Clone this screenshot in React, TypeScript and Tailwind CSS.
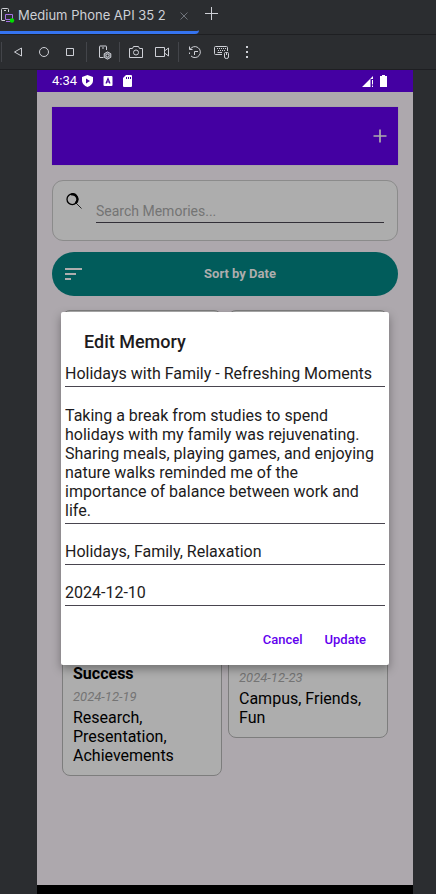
import React from "react";

function Divider() {
  return <span className="h-5 w-px shrink-0 bg-[#43454a]" />;
}

function ToolButton({ label, className, children }: { label: string; className: string; children: React.ReactNode }) {
  return (
    <button type="button" aria-label={label} className={`shrink-0 ${className}`}>
      <svg width="16" height="16" viewBox="0 0 16 16" fill="none" stroke="#ced0d6" strokeWidth="1">
        {children}
      </svg>
    </button>
  );
}

function TabBar() {
  return (
    <div className="flex h-[35px] border-b border-[#1e1f22]">
      <div className="flex w-[199px] shrink-0 items-center rounded-br-sm border-b-3 border-[#3574f0] text-[#ced0d6]">
        <svg width="16" height="16" viewBox="0 0 16 16" fill="none" className="shrink-0">
          <path d="M5 12.500H2A.5.5 0 0 1 1.500 12V1.500A1 1 0 0 1 2.500 .500H7.500A1 1 0 0 1 8.500 1.500V4" stroke="#ced0d6" />
          <path d="M4 2.500H6" stroke="#ced0d6" />
          <path d="M5.500 6.500H12.500V11.500H5.500ZM6 13.500H10" stroke="#a571e6" />
          <circle cx="12" cy="12.500" r="2.200" fill="#00e000" />
        </svg>
        <span className="ml-[2px] whitespace-nowrap font-['Inter',sans-serif] text-[13px]">Medium Phone API 35 2</span>
        <button type="button" aria-label="Close tab" className="ml-[13px]">
          <svg width="10" height="10" viewBox="0 0 10 10" stroke="#6f737a" fill="none">
            <path d="M1.500 1.500L8.500 8.500M8.500 1.500L1.500 8.500" />
          </svg>
        </button>
      </div>
      <button type="button" aria-label="New tab" className="mb-2 ml-[5px]">
        <svg width="14" height="14" viewBox="0 0 14 14" stroke="#ced0d6" fill="none">
          <path d="M7.500 1V14M1 7.500H14" />
        </svg>
      </button>
    </div>
  );
}

function Toolbar() {
  return (
    <div className="flex h-[35px] items-center border-b border-[#1e1f22] pl-px">
      <Divider />
      <ToolButton label="Back" className="ml-2">
        <path d="M11.500 4V12L4.500 8Z" strokeLinejoin="round" />
      </ToolButton>
      <ToolButton label="Home" className="ml-[10px]">
        <circle cx="8" cy="8" r="4.500" />
      </ToolButton>
      <ToolButton label="Overview" className="ml-[10px] mr-2">
        <path d="M4.500 4.500H11.500V11.500H4.500Z" />
      </ToolButton>
      <Divider />
      <ToolButton label="Device settings" className="ml-[10px] mr-[6px]">
        <path d="M6.500 13.500H3A.5.5 0 0 1 2.500 13V2.500A.5.5 0 0 1 3 2H9A.5.5 0 0 1 9.500 2.500V6M5 4H7" />
        <path d="M10.500 7.900L13.800 9.700V13.300L10.500 15.200L7.200 13.300V9.700Z" fill="#6f737a" />
        <circle cx="10.500" cy="11.500" r="1.500" fill="#2b2d30" />
      </ToolButton>
      <Divider />
      <ToolButton label="Screenshot" className="ml-2">
        <path d="M1.500 4.500H4.500L5.500 2.500H10.500L11.500 4.500H14.500V13.500H1.500Z" strokeLinejoin="round" />
        <circle cx="8" cy="8.500" r="2.500" />
      </ToolButton>
      <ToolButton label="Record screen" className="ml-[10px] mr-2">
        <path d="M1.500 3.500H10.500V12.500H1.500ZM10.500 7L14.500 4V12L10.500 9" strokeLinejoin="round" />
      </ToolButton>
      <Divider />
      <ToolButton label="Snapshots" className="ml-2">
        <path d="M2.500 2.500V5.500H5.500M3 5.500A5.500 5.500 0 1 1 4 12M2.500 8.500V10M7.500 11V7.500H11" />
      </ToolButton>
      <ToolButton label="Hardware input" className="ml-[10px]">
        <path d="M9 10.500H2.500A1 1 0 0 1 1.500 9.500V3.500A1 1 0 0 1 2.500 2.500H13.500A1 1 0 0 1 14.500 3.500V7" />
        <path d="M4 4.500H13M5 6.500H12" strokeDasharray="1 1" />
        <path d="M4.500 8.500H9M11.500 9.500Q11.500 8.500 12.500 8.500H14.500Q15.500 8.500 15.500 9.500V13Q15.500 14.500 13.500 14.500Q11.500 14.500 11.500 13ZM13.500 9V11" />
      </ToolButton>
      <ToolButton label="More" className="ml-[10px]">
        <path d="M7 2H9V4H7ZM7 7H9V9H7ZM7 12H9V14H7Z" fill="#ced0d6" stroke="none" />
      </ToolButton>
    </div>
  );
}

function StatusBar() {
  return (
    <div className="flex h-[22px] items-center bg-[#4400a2] pl-[15px] pr-[26px] text-white">
      <span className="text-[13px]">4:34</span>
      <svg width="11" height="12" viewBox="0 0 11 12" className="ml-[5px]">
        <path d="M5.500 0L11 2V6Q10.500 10 5.500 12Q.5 10 0 6V2Z" fill="#fff" />
        <path d="M4 3.500L8 6L4 8.500Z" fill="#4400a2" />
      </svg>
      <svg width="10" height="10" viewBox="0 0 10 10" className="ml-[10px]">
        <rect x="0.500" width="9" height="10" rx="1" fill="#fff" />
        <path d="M3 7.500L5 2.500L7 7.500M3.700 6H6.300" stroke="#4400a2" strokeWidth="1.200" fill="none" />
      </svg>
      <svg width="9" height="12" viewBox="0 0 9 12" className="ml-[10px]">
        <path d="M3 0H8Q9 0 9 1V11Q9 12 8 12H1Q0 12 0 11V3Z" fill="#fff" />
        <path d="M3.500 2V4M5.500 2V4M7.500 2V4" stroke="#4400a2" />
      </svg>
      <svg width="12" height="11" viewBox="0 0 12 11" className="ml-auto">
        <path d="M0 11L11 0V3H8.500V11Z" fill="#fff" />
        <path d="M10.500 4V8.500M10.500 9.500V11" stroke="#fff" />
      </svg>
      <svg width="7" height="12" viewBox="0 0 7 12" className="ml-[6px]">
        <path d="M2 0H5V1H7V12H0V1H2Z" fill="#fff" />
      </svg>
    </div>
  );
}

function MemoryCard({ title, date, tags, className }: { title?: string; date: string; tags: string; className: string }) {
  return (
    <article className={`flex flex-1 flex-col justify-end rounded-lg border border-[#7d7d7d] bg-[#adadad] px-[10px] pb-[10px] text-black ${className}`}>
      {title && <h3 className="text-[16px] leading-[19px] font-bold">{title}</h3>}
      <time className="mt-1 mb-px text-[13px] leading-5 text-[#747474] italic">{date}</time>
      <p className="text-[16px] leading-[19px]">{tags}</p>
    </article>
  );
}

const fieldClass = "block w-full resize-none overflow-hidden border-b border-[#49454f] bg-transparent pb-[3px] text-[16px] leading-[19px] text-[#1d1b20] outline-none";

function EditDialog() {
  return (
    <form
      role="dialog"
      aria-labelledby="dialog-title"
      onSubmit={(e) => e.preventDefault()}
      className="absolute inset-x-6 top-[220px] rounded-xs bg-white px-1 pb-[7px] shadow-[0_4px_10px_rgba(0,0,0,0.35)]"
    >
      <h2 id="dialog-title" className="px-[19px] pt-[18px] text-[18px] leading-6 font-medium text-[#1d1b20]">Edit Memory</h2>
      <input aria-label="Title" defaultValue="Holidays with Family - Refreshing Moments" className={`${fieldClass} pt-[10px]`} />
      <textarea
        aria-label="Description"
        rows={6}
        className={`${fieldClass} pt-[19px]`}
        defaultValue={"Taking a break from studies to spend\nholidays with my family was rejuvenating.\nSharing meals, playing games, and enjoying\nnature walks reminded me of the\nimportance of balance between work and\nlife."}
      />
      <input aria-label="Tags" defaultValue="Holidays, Family, Relaxation" className={`${fieldClass} pt-[18px]`} />
      <input aria-label="Date" defaultValue="2024-12-10" className={`${fieldClass} pt-[18px]`} />
      <div className="mt-4 flex justify-end gap-[6px] pr-[11px] text-[13px] font-medium text-[#6200ee]">
        <button type="button" className="h-9 px-2">Cancel</button>
        <button type="submit" className="h-9 px-2">Update</button>
      </div>
    </form>
  );
}

export default function App() {
  return (
    <div className="flex min-h-screen flex-col bg-[#2b2d30] font-['Roboto',sans-serif]">
      <TabBar />
      <Toolbar />
      <div className="mr-[23px] ml-[37px] flex flex-1 flex-col">
        <StatusBar />
        <main className="relative flex-1 bg-[#ada8ad] p-[15px]">
          <header className="flex h-[58px] items-center justify-end bg-[#4400a2] pr-[11px] shadow-[0_0_1px_#8f8894]">
            <button type="button" aria-label="Add memory">
              <svg width="14" height="14" viewBox="0 0 14 14" stroke="#adadad" strokeWidth="1.700">
                <path d="M7 .500V13.500M.500 7H13.500" />
              </svg>
            </button>
          </header>
          <div className="mt-[15px] flex h-[61px] rounded-[11px] border border-[#8b8b8b] bg-[#adadad] pt-3 pr-[13px] pl-[13px]">
            <svg width="16" height="16" viewBox="0 0 16 16" fill="none" stroke="#000" className="shrink-0">
              <circle cx="6.300" cy="6.300" r="5.300" strokeWidth="1.300" />
              <path d="M5 1.500A5 5 0 0 1 9.500 10.200" strokeWidth="2.300" />
              <path d="M10 10L15.500 15.500" strokeWidth="0.800" />
            </svg>
            <input
              aria-label="Search Memories"
              placeholder="Search Memories..."
              className="ml-[14px] h-[30px] min-w-0 flex-1 border-b border-[#322f37] bg-transparent pt-[6px] text-[14px] outline-none placeholder:text-[#747474]"
            />
          </div>
          <button type="button" className="mt-[11px] flex h-11 w-full items-center rounded-full bg-[#015c5b] pl-[13px] text-[13px] font-bold text-[#adadad]">
            <svg width="17" height="12" viewBox="0 0 17 12" stroke="#adadad" strokeWidth="2" className="shrink-0">
              <path d="M0 1H17M0 6H11M0 11H6" />
            </svg>
            <span className="flex-1">Sort by Date</span>
          </button>
          <section className="mt-[14px] flex items-start gap-[6px] px-[10px]">
            <MemoryCard title="Success" date="2024-12-19" tags="Research, Presentation, Achievements" className="min-h-[466px]" />
            <MemoryCard date="2024-12-23" tags="Campus, Friends, Fun" className="min-h-[428px]" />
          </section>
          <EditDialog />
        </main>
        <div className="h-[9px] bg-black" />
      </div>
    </div>
  );
}
